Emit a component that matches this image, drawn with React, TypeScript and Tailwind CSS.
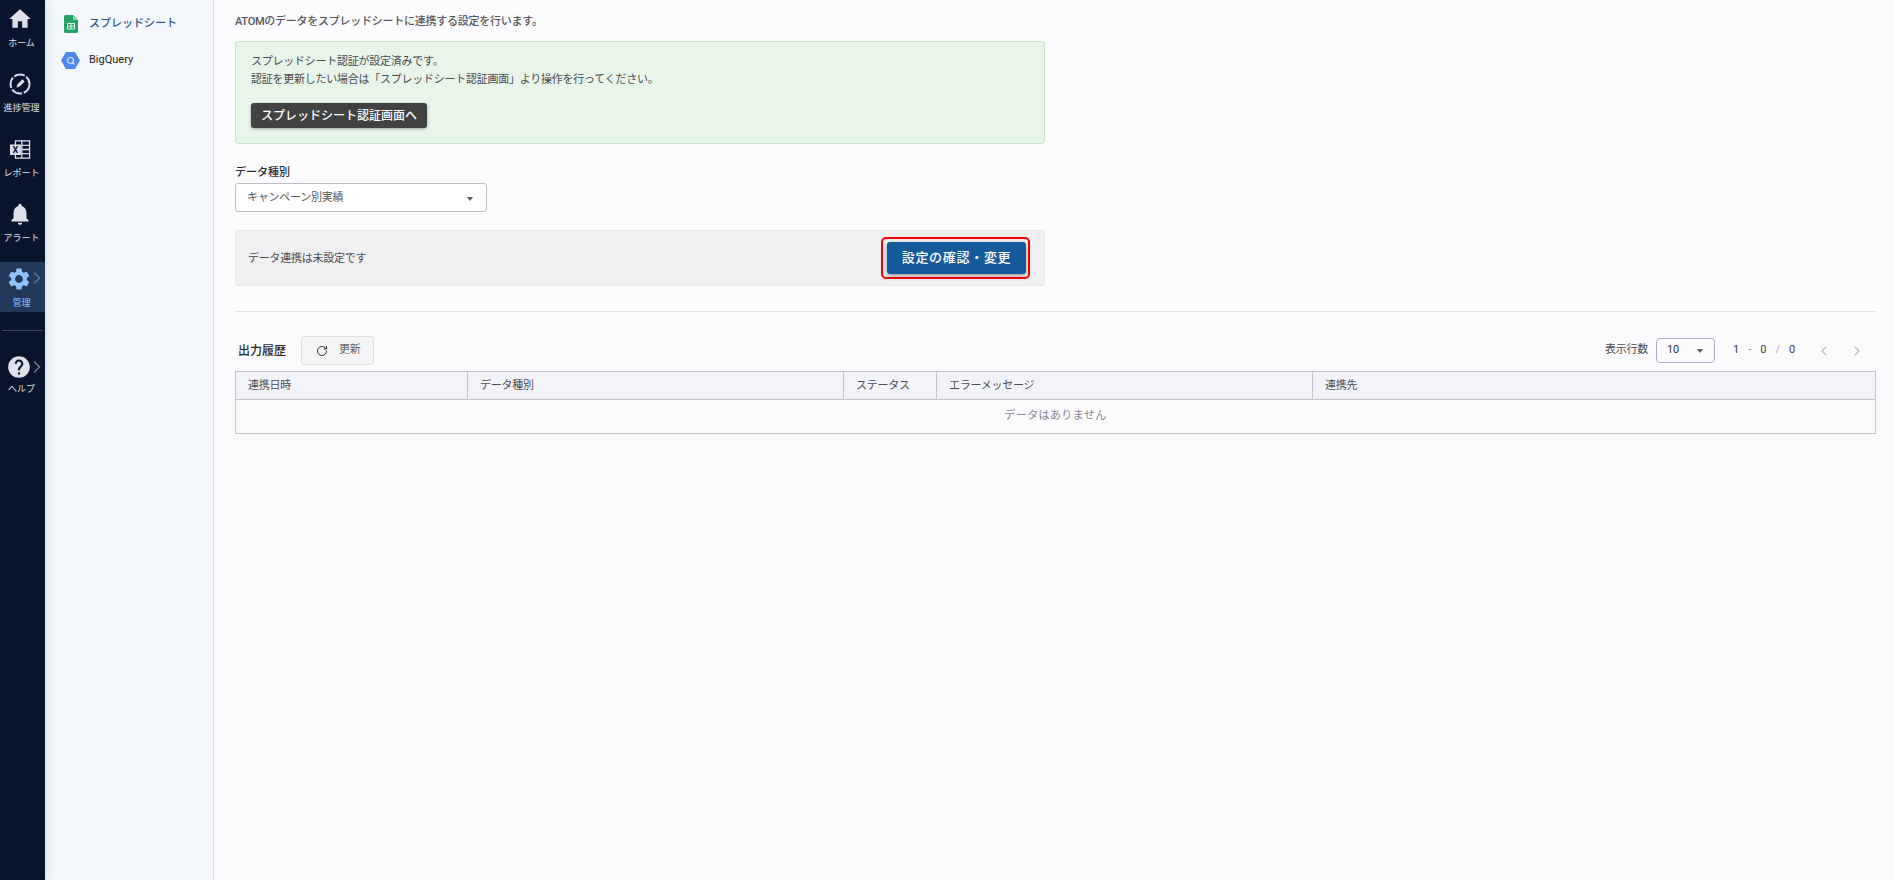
import { ChevronLeft, ChevronRight, RotateCw } from 'lucide-react'

const HOME = 'M10 20v-6h4v6h5v-8h3L12 3 2 12h3v8z'
const BELL = 'M12 22c1.1 0 2-.9 2-2h-4c0 1.1.9 2 2 2zm6-6v-5c0-3.07-1.63-5.64-4.5-6.32V4c0-.83-.67-1.5-1.5-1.5s-1.5.67-1.5 1.5v.68C7.64 5.36 6 7.92 6 11v5l-2 2v1h16v-1l-2-2z'
const GEAR = 'M19.14 12.94c.04-.3.06-.61.06-.94 0-.32-.02-.64-.07-.94l2.03-1.58c.18-.14.23-.41.12-.61l-1.92-3.32c-.12-.22-.37-.29-.59-.22l-2.39.96c-.5-.38-1.03-.7-1.62-.94l-.36-2.54c-.04-.24-.24-.41-.48-.41h-3.84c-.24 0-.43.17-.47.41l-.36 2.54c-.59.24-1.13.57-1.62.94l-2.39-.96c-.22-.08-.47 0-.59.22L2.74 8.87c-.12.21-.08.47.12.61l2.03 1.58c-.05.3-.09.63-.09.94s.02.64.07.94l-2.03 1.58c-.18.14-.23.41-.12.61l1.92 3.32c.12.22.37.29.59.22l2.39-.96c.5.38 1.03.7 1.62.94l.36 2.54c.05.24.24.41.48.41h3.84c.24 0 .44-.17.47-.41l.36-2.54c.59-.24 1.13-.56 1.62-.94l2.39.96c.22.08.47 0 .59-.22l1.92-3.32c.12-.22.07-.47-.12-.61l-2.01-1.58zM12 15.6c-1.98 0-3.6-1.62-3.6-3.6s1.62-3.6 3.6-3.6 3.6 1.62 3.6 3.6-1.62 3.6-3.6 3.6z'
const HELP = 'M12 2C6.48 2 2 6.48 2 12s4.48 10 10 10 10-4.48 10-10S17.52 2 12 2zm1 17h-2v-2h2v2zm2.07-7.75l-.9.92C13.45 12.9 13 13.5 13 15h-2v-.5c0-1.1.45-2.1 1.17-2.83l1.24-1.26c.37-.36.59-.86.59-1.41 0-1.1-.9-2-2-2s-2 .9-2 2H8c0-2.21 1.79-4 4-4s4 1.79 4 4c0 .88-.36 1.68-.93 2.25z'

function Filled({ d, size = 26 }: { d: string; size?: number }) {
  return (
    <svg width={size} height={size} viewBox="0 0 24 24" fill="currentColor">
      <path d={d} />
    </svg>
  )
}

function ProgressIcon() {
  return (
    <svg width="24" height="24" viewBox="0 0 24 24" fill="none" stroke="currentColor">
      <circle cx="12" cy="12" r="9.5" strokeWidth="2" strokeDasharray="11 1.8" />
      <path d="M8.5 15.5l1-3.2 5-5 2.2 2.2-5 5z" fill="currentColor" stroke="none" />
    </svg>
  )
}

function ReportIcon() {
  return (
    <svg width="22" height="21" viewBox="0 0 24 23">
      <path d="M7 2h15.500v19H7z" fill="none" stroke="currentColor" strokeWidth="1.400" />
      <path d="M14 2v19M14 7h8.500M14 11.500h8.500M14 16h8.500" stroke="currentColor" strokeWidth="1.400" />
      <rect x="1" y="6" width="12" height="11.500" fill="currentColor" />
      <text x="7" y="15.500" textAnchor="middle" fontSize="10" fontWeight="700" fill="#07142b" fontFamily="Roboto, sans-serif">X</text>
    </svg>
  )
}

function NavItem({ icon, label, active, arrow, tight }: { icon: React.ReactNode; label: string; active?: boolean; arrow?: boolean; tight?: boolean }) {
  return (
    <div className={`relative flex h-[50px] w-[45px] flex-col items-center pr-[2px] ${active ? 'bg-[#22395a] text-[#8ec4fb]' : 'text-[#dfe1ea]'}`}>
      <div className={`mt-[4px] flex h-[26px] items-center justify-center ${arrow ? 'pr-[6px]' : 'pr-[3px]'}`}>{icon}</div>
      <span className={`${tight ? 'mt-[3px]' : 'mt-[5px]'} whitespace-nowrap text-[9px] leading-[12px]`}>{label}</span>
      {arrow && (
        <ChevronRight
          size={20}
          strokeWidth={1.8}
          className={`absolute left-[27px] ${tight ? 'top-[7px] text-[#7b7f88]' : 'top-[6px] text-[#62799a]'}`}
        />
      )}
    </div>
  )
}

function SheetsIcon() {
  return (
    <svg width="14" height="18" viewBox="0 0 14 18">
      <path d="M1.500 0H9l5 5v11.500a1.500 1.500 0 0 1-1.500 1.500h-11A1.500 1.500 0 0 1 0 16.500v-15A1.500 1.500 0 0 1 1.500 0z" fill="#23a566" />
      <path d="M9 0l5 5H9z" fill="#8ed1b1" />
      <path d="M3.500 8.500h7v5.500h-7zM3.500 11.200h7M7 8.500v5.500" fill="none" stroke="#e8f5ee" strokeWidth="1" />
    </svg>
  )
}

function BigQueryIcon() {
  return (
    <svg width="19" height="17" viewBox="0 0 19 17">
      <path d="M5 0h9l5 8.500-5 8.500H5L0 8.500z" fill="#4b86e8" />
      <circle cx="9.500" cy="8.500" r="3" fill="none" stroke="#d4e3fb" strokeWidth="1.200" />
      <path d="M11.500 10.500l2 2" stroke="#d4e3fb" strokeWidth="1.200" />
    </svg>
  )
}

const columns = [
  { label: '連携日時', width: 'w-[231px]' },
  { label: 'データ種別', width: 'w-[376px]' },
  { label: 'ステータス', width: 'w-[93px]' },
  { label: 'エラーメッセージ', width: 'w-[376px]' },
  { label: '連携先', width: 'flex-1' },
]

export default function App() {
  return (
    <div className="flex h-[880px] w-[1894px] overflow-hidden bg-[#fcfcfe] font-['Roboto','Noto_Sans_CJK_JP',sans-serif] text-[11px] tracking-[-0.25px] text-[#4a4a4f]">
      <aside className="relative z-10 flex w-[45px] shrink-0 flex-col gap-[15px] bg-[#07142b] pt-[2px] tracking-normal shadow-[0_0_10px_rgba(20,30,60,0.18)]">
        <NavItem icon={<Filled d={HOME} />} label="ホーム" />
        <NavItem icon={<ProgressIcon />} label="進捗管理" />
        <NavItem icon={<ReportIcon />} label="レポート" />
        <NavItem icon={<Filled d={BELL} />} label="アラート" />
        <NavItem icon={<Filled d={GEAR} />} label="管理" active arrow />
        <div className="mx-[2px] mt-[3px] h-px bg-[#3a4659]" />
        <div className="mt-[4px]">
          <NavItem icon={<Filled d={HELP} />} label="ヘルプ" arrow tight />
        </div>
      </aside>

      <nav className="flex w-[169px] shrink-0 flex-col gap-[18px] border-r border-[#dcdde3] bg-[#f4f7fc] pl-[16px] pt-[15px] tracking-normal">
        <div className="flex h-[18px] items-center">
          <div className="flex w-[28px] justify-start pl-[3px]"><SheetsIcon /></div>
          <span className="font-medium text-[#2c5590]">スプレッドシート</span>
        </div>
        <div className="flex h-[18px] items-center">
          <div className="flex w-[28px] justify-start"><BigQueryIcon /></div>
          <span className="text-[#222]">BigQuery</span>
        </div>
      </nav>

      <main className="flex min-w-0 flex-1 flex-col pl-[21px] pr-[18px]">
        <p className="mt-[15px] h-[14px] leading-[14px] font-medium text-[#55555a]">ATOMのデータをスプレッドシートに連携する設定を行います。</p>

        <section className="mt-[12px] h-[103px] w-[810px] rounded-[3px] border border-[#c8e6c9] bg-[#e8f5e9] px-[15px] pt-[11px]">
          <p className="leading-[18px]">スプレッドシート認証が設定済みです。</p>
          <p className="leading-[18px]">認証を更新したい場合は「スプレッドシート認証画面」より操作を行ってください。</p>
          <button className="mt-[14px] flex h-[25px] w-[176px] items-center justify-center rounded-[3px] bg-[#424242] pt-[1px] text-[12px] font-medium tracking-[0px] text-white shadow-[0_1px_3px_rgba(0,0,0,0.35)]">
            スプレッドシート認証画面へ
          </button>
        </section>

        <label className="mt-[22px] h-[13px] leading-[13px] font-medium tracking-normal text-[#2a2a30]">データ種別</label>
        <div className="mt-[4px] flex h-[29px] w-[252px] items-center justify-between rounded-[3px] border border-[#bdbdc4] bg-white pl-[11px] pr-[13px] text-[#55555a]">
          <span className="pt-[2px]">キャンペーン別実績</span>
          <span className="mt-[2px] h-0 w-0 border-x-[3.5px] border-t-[4px] border-x-transparent border-t-[#5a5a60]" />
        </div>

        <section className="mt-[18px] flex h-[56px] w-[810px] items-center justify-between rounded-[3px] border border-[#e6e6ea] bg-[#f0f0f2] pl-[12px] pr-[18px]">
          <span className="pt-[2px]">データ連携は未設定です</span>
          <div className="relative">
            <button className="flex h-[32px] w-[139px] items-center justify-center rounded-[3px] bg-[#155a9a] text-[13px] font-medium tracking-[0.7px] text-white shadow-[0_2px_5px_rgba(0,0,0,0.35)]">
              設定の確認・変更
            </button>
            <span className="absolute -bottom-[5px] -left-[6px] -right-[4px] -top-[5px] rounded-[5px] border-2 border-[#f00000]" />
          </div>
        </section>

        <div className="mt-[25px] h-px bg-[#dedee3]" />

        <div className="mt-[24px] flex h-[29px] items-center">
          <h2 className="ml-[3px] text-[12px] font-medium tracking-normal text-[#26262b]">出力履歴</h2>
          <button className="ml-[15px] flex h-[29px] w-[73px] items-center rounded-[3px] border border-[#dddde2] bg-[#f5f5f7] pl-[14px]">
            <RotateCw size={12} strokeWidth={2} className="text-[#2a2a30]" />
            <span className="ml-[11px] text-[#66666b]">更新</span>
          </button>
          <div className="ml-auto flex items-center pr-[11px]">
            <span>表示行数</span>
            <div className="ml-[8px] flex h-[25px] w-[59px] items-center justify-between rounded-[4px] border border-[#a7b0d0] pl-[10px] pr-[11px]">
              <span className="text-[#333]">10</span>
              <span className="mt-[1px] h-0 w-0 border-x-[3.5px] border-t-[4px] border-x-transparent border-t-[#5a5a60]" />
            </div>
            <div className="ml-[18px] flex w-[62px] items-center justify-between text-[#3a3a40]">
              <span>1</span>
              <span className="text-[#888]">-</span>
              <span>0</span>
              <span className="text-[#aaa]">/</span>
              <span>0</span>
            </div>
            <ChevronLeft size={16} strokeWidth={1.6} className="ml-[21px] text-[#b5b5bb]" />
            <ChevronRight size={16} strokeWidth={1.6} className="ml-[17px] text-[#b5b5bb]" />
          </div>
        </div>

        <div className="mt-[6px] border border-[#c4c4ca]">
          <div className="flex h-[28px] border-b border-[#c4c4ca] bg-[#f3f4f9]">
            {columns.map((col, i) => (
              <div key={col.label} className={`${col.width} flex items-center pl-[12px] pt-[1px] ${i > 0 ? 'border-l border-[#c4c4ca]' : ''}`}>
                {col.label}
              </div>
            ))}
          </div>
          <div className="flex h-[33px] items-center justify-center tracking-[0.4px] text-[#85858b]">データはありません</div>
        </div>
      </main>
    </div>
  )
}
